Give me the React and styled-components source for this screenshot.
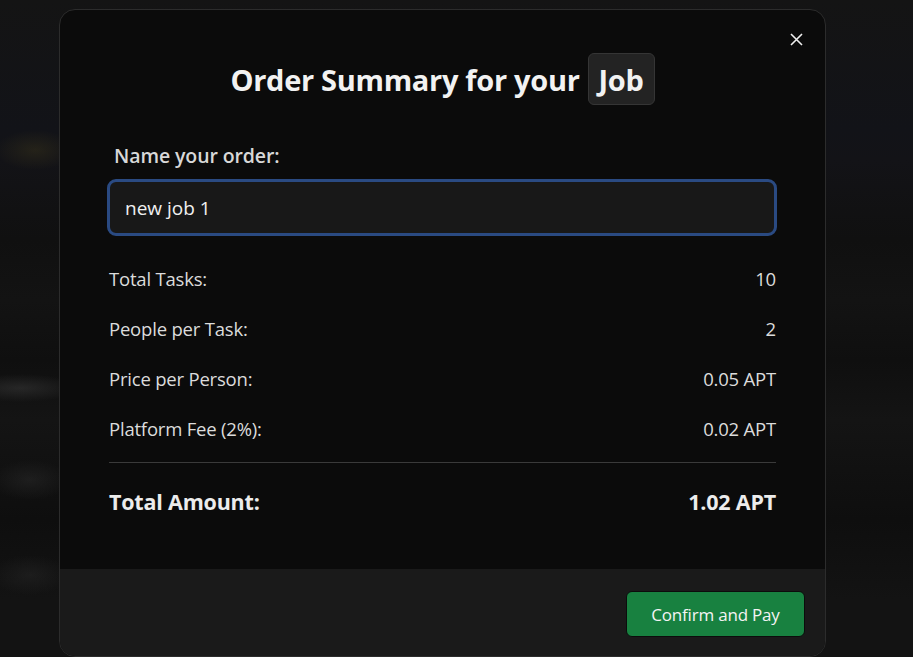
import React from 'react';
import styled, { createGlobalStyle } from 'styled-components';

const GlobalStyle = createGlobalStyle`
    html, body {
        margin: 0;
        padding: 0;
        background: #131313;
        font-family: "Open Sans", "Noto Sans", sans-serif;
        color: #e6e6e6;
    }
    * { box-sizing: border-box; }
`;

const Backdrop = styled.div`
    width: 913px;
    height: 657px;
    overflow: hidden;
    padding-top: 9px;
    padding-left: 59px;
    background:
        radial-gradient(ellipse 40px 20px at 35px 150px, rgba(90, 80, 30, 0.25), transparent),
        radial-gradient(ellipse 60px 14px at 20px 388px, rgba(60, 60, 60, 0.5), transparent),
        radial-gradient(ellipse 40px 20px at 30px 480px, rgba(50, 50, 50, 0.4), transparent),
        radial-gradient(ellipse 40px 20px at 30px 575px, rgba(45, 45, 45, 0.4), transparent),
        linear-gradient(180deg, #141414 0px, #121318 130px, #131317 160px, #101010 240px, #131313 300px, #0f0f0f 360px, #141414 420px, #0e0e0e 520px, #131313 600px);
`;

const Modal = styled.div`
    width: 767px;
    height: 648px;
    background: #0b0b0b;
    border: 1px solid #2c2c2c;
    border-radius: 16px;
    overflow: hidden;
    display: flex;
    flex-direction: column;
    position: relative;
`;

const CloseButton = styled.button`
    position: absolute;
    top: 19px;
    right: 19px;
    width: 20px;
    height: 20px;
    padding: 0;
    border: none;
    background: transparent;
    color: #f0f0f0;
    display: flex;
    align-items: center;
    justify-content: center;
    cursor: pointer;
`;

const Body = styled.div`
    flex: 1;
    padding: 43px 49px 0 49px;
`;

const Title = styled.h2`
    margin: 0;
    display: flex;
    align-items: center;
    justify-content: center;
    gap: 8px;
    font-size: 29px;
    font-weight: 700;
    color: #f2f2f2;
    letter-spacing: -0.3px;
`;

const Badge = styled.span`
    background: #232323;
    border: 1px solid #353535;
    border-radius: 6px;
    padding: 0 10px;
    height: 52px;
    display: inline-flex;
    align-items: center;
`;

const Label = styled.label`
    display: block;
    margin: 37px 0 10px 5px;
    font-size: 19.5px;
    font-weight: 600;
    color: #d8d8d8;
    letter-spacing: -0.1px;
`;

const Input = styled.input`
    width: 670px;
    height: 57px;
    margin-left: -2px;
    border: 3px solid #2a4a82;
    border-radius: 9px;
    background: #181818;
    color: #f0f0f0;
    font-family: inherit;
    font-size: 19px;
    padding: 0 15px;
    outline: none;
`;

const Rows = styled.div`
    margin-top: 17px;
`;

const Row = styled.div`
    display: flex;
    justify-content: space-between;
    align-items: center;
    height: 50px;
    font-size: ${p => (p.total ? '21.5px' : '18.5px')};
    font-weight: ${p => (p.total ? 700 : 400)};
    color: ${p => (p.total ? '#ececec' : '#dcdcdc')};
    letter-spacing: -0.2px;
`;

const Divider = styled.hr`
    margin: 9px 0 13px;
    border: none;
    border-top: 1px solid #3a3a3a;
`;

const Footer = styled.div`
    height: 87px;
    background: #1a1a1a;
    display: flex;
    justify-content: flex-end;
    align-items: center;
    padding: 3px 20px 0 0;
`;

const PayButton = styled.button`
    width: 179px;
    height: 46px;
    background: #188140;
    border: 1px solid #0c0c0c;
    border-radius: 6px;
    color: #f4f4f4;
    font-family: inherit;
    font-size: 17px;
    cursor: pointer;
    letter-spacing: -0.2px;
`;

const rows = [
    ['Total Tasks:', '10'],
    ['People per Task:', '2'],
    ['Price per Person:', '0.05 APT'],
    ['Platform Fee (2%):', '0.02 APT'],
];

export default function App() {
    return (
        <>
            <GlobalStyle />
            <Backdrop>
                <Modal>
                    <CloseButton aria-label="Close">
                        <svg width="13" height="13" viewBox="0 0 13 13" fill="none" stroke="currentColor" strokeWidth="1.6">
                            <path d="M1 1L12 12M12 1L1 12" />
                        </svg>
                    </CloseButton>
                    <Body>
                        <Title>
                            Order Summary for your <Badge>Job</Badge>
                        </Title>
                        <Label>Name your order:</Label>
                        <Input defaultValue="new job 1" />
                        <Rows>
                            {rows.map(([k, v]) => (
                                <Row key={k}>
                                    <span>{k}</span>
                                    <span>{v}</span>
                                </Row>
                            ))}
                            <Divider />
                            <Row total>
                                <span>Total Amount:</span>
                                <span>1.02 APT</span>
                            </Row>
                        </Rows>
                    </Body>
                    <Footer>
                        <PayButton>Confirm and Pay</PayButton>
                    </Footer>
                </Modal>
            </Backdrop>
        </>
    );
}
